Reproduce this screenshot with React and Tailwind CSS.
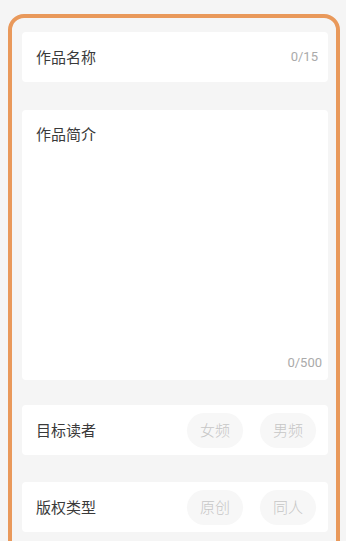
import React from "react";

const font = { fontFamily: '"Noto Sans CJK SC", "Noto Sans", sans-serif' };
const numFont = { fontFamily: 'Roboto, "Noto Sans", sans-serif' };

function Pill({ children }) {
  return (
    <div className="w-[56px] h-[35px] rounded-full bg-[#f7f7f7] flex items-center justify-center text-[15px] font-light text-[#c6c6c6]">
      {children}
    </div>
  );
}

function ChoiceRow({ label, options }) {
  return (
    <div className="h-[50px] bg-white rounded-[4px] flex items-center pl-[14px] pr-[12px]">
      <span className="text-[15px] text-[#3a3a3a]">{label}</span>
      <div className="ml-auto flex gap-[17px]">
        {options.map((o) => (
          <Pill key={o}>{o}</Pill>
        ))}
      </div>
    </div>
  );
}

export default function App() {
  return (
    <div className="h-[541px] overflow-hidden bg-[#f5f5f5] pt-[14px] pl-[8px]" style={font}>
      <div className="w-[332px] h-[560px] border-[4px] border-[#e9995b] rounded-[16px] bg-[#f5f5f5] pt-[14px] pl-[10px] pr-[8px] flex flex-col">
        <div className="h-[50px] bg-white rounded-[4px] flex items-center pl-[14px] pr-[10px]">
          <span className="text-[15px] text-[#3a3a3a]">作品名称</span>
          <span className="ml-auto text-[13px] text-[#aaaaaa]" style={numFont}>0/15</span>
        </div>
        <div className="mt-[28px] h-[270px] bg-white rounded-[4px] flex flex-col pl-[14px] pr-[6px] pt-[13px] pb-[8px]">
          <span className="text-[15px] text-[#3a3a3a]">作品简介</span>
          <span className="mt-auto self-end text-[13px] text-[#aaaaaa]" style={numFont}>0/500</span>
        </div>
        <div className="mt-[25px]">
          <ChoiceRow label="目标读者" options={["女频", "男频"]} />
        </div>
        <div className="mt-[27px]">
          <ChoiceRow label="版权类型" options={["原创", "同人"]} />
        </div>
      </div>
    </div>
  );
}
